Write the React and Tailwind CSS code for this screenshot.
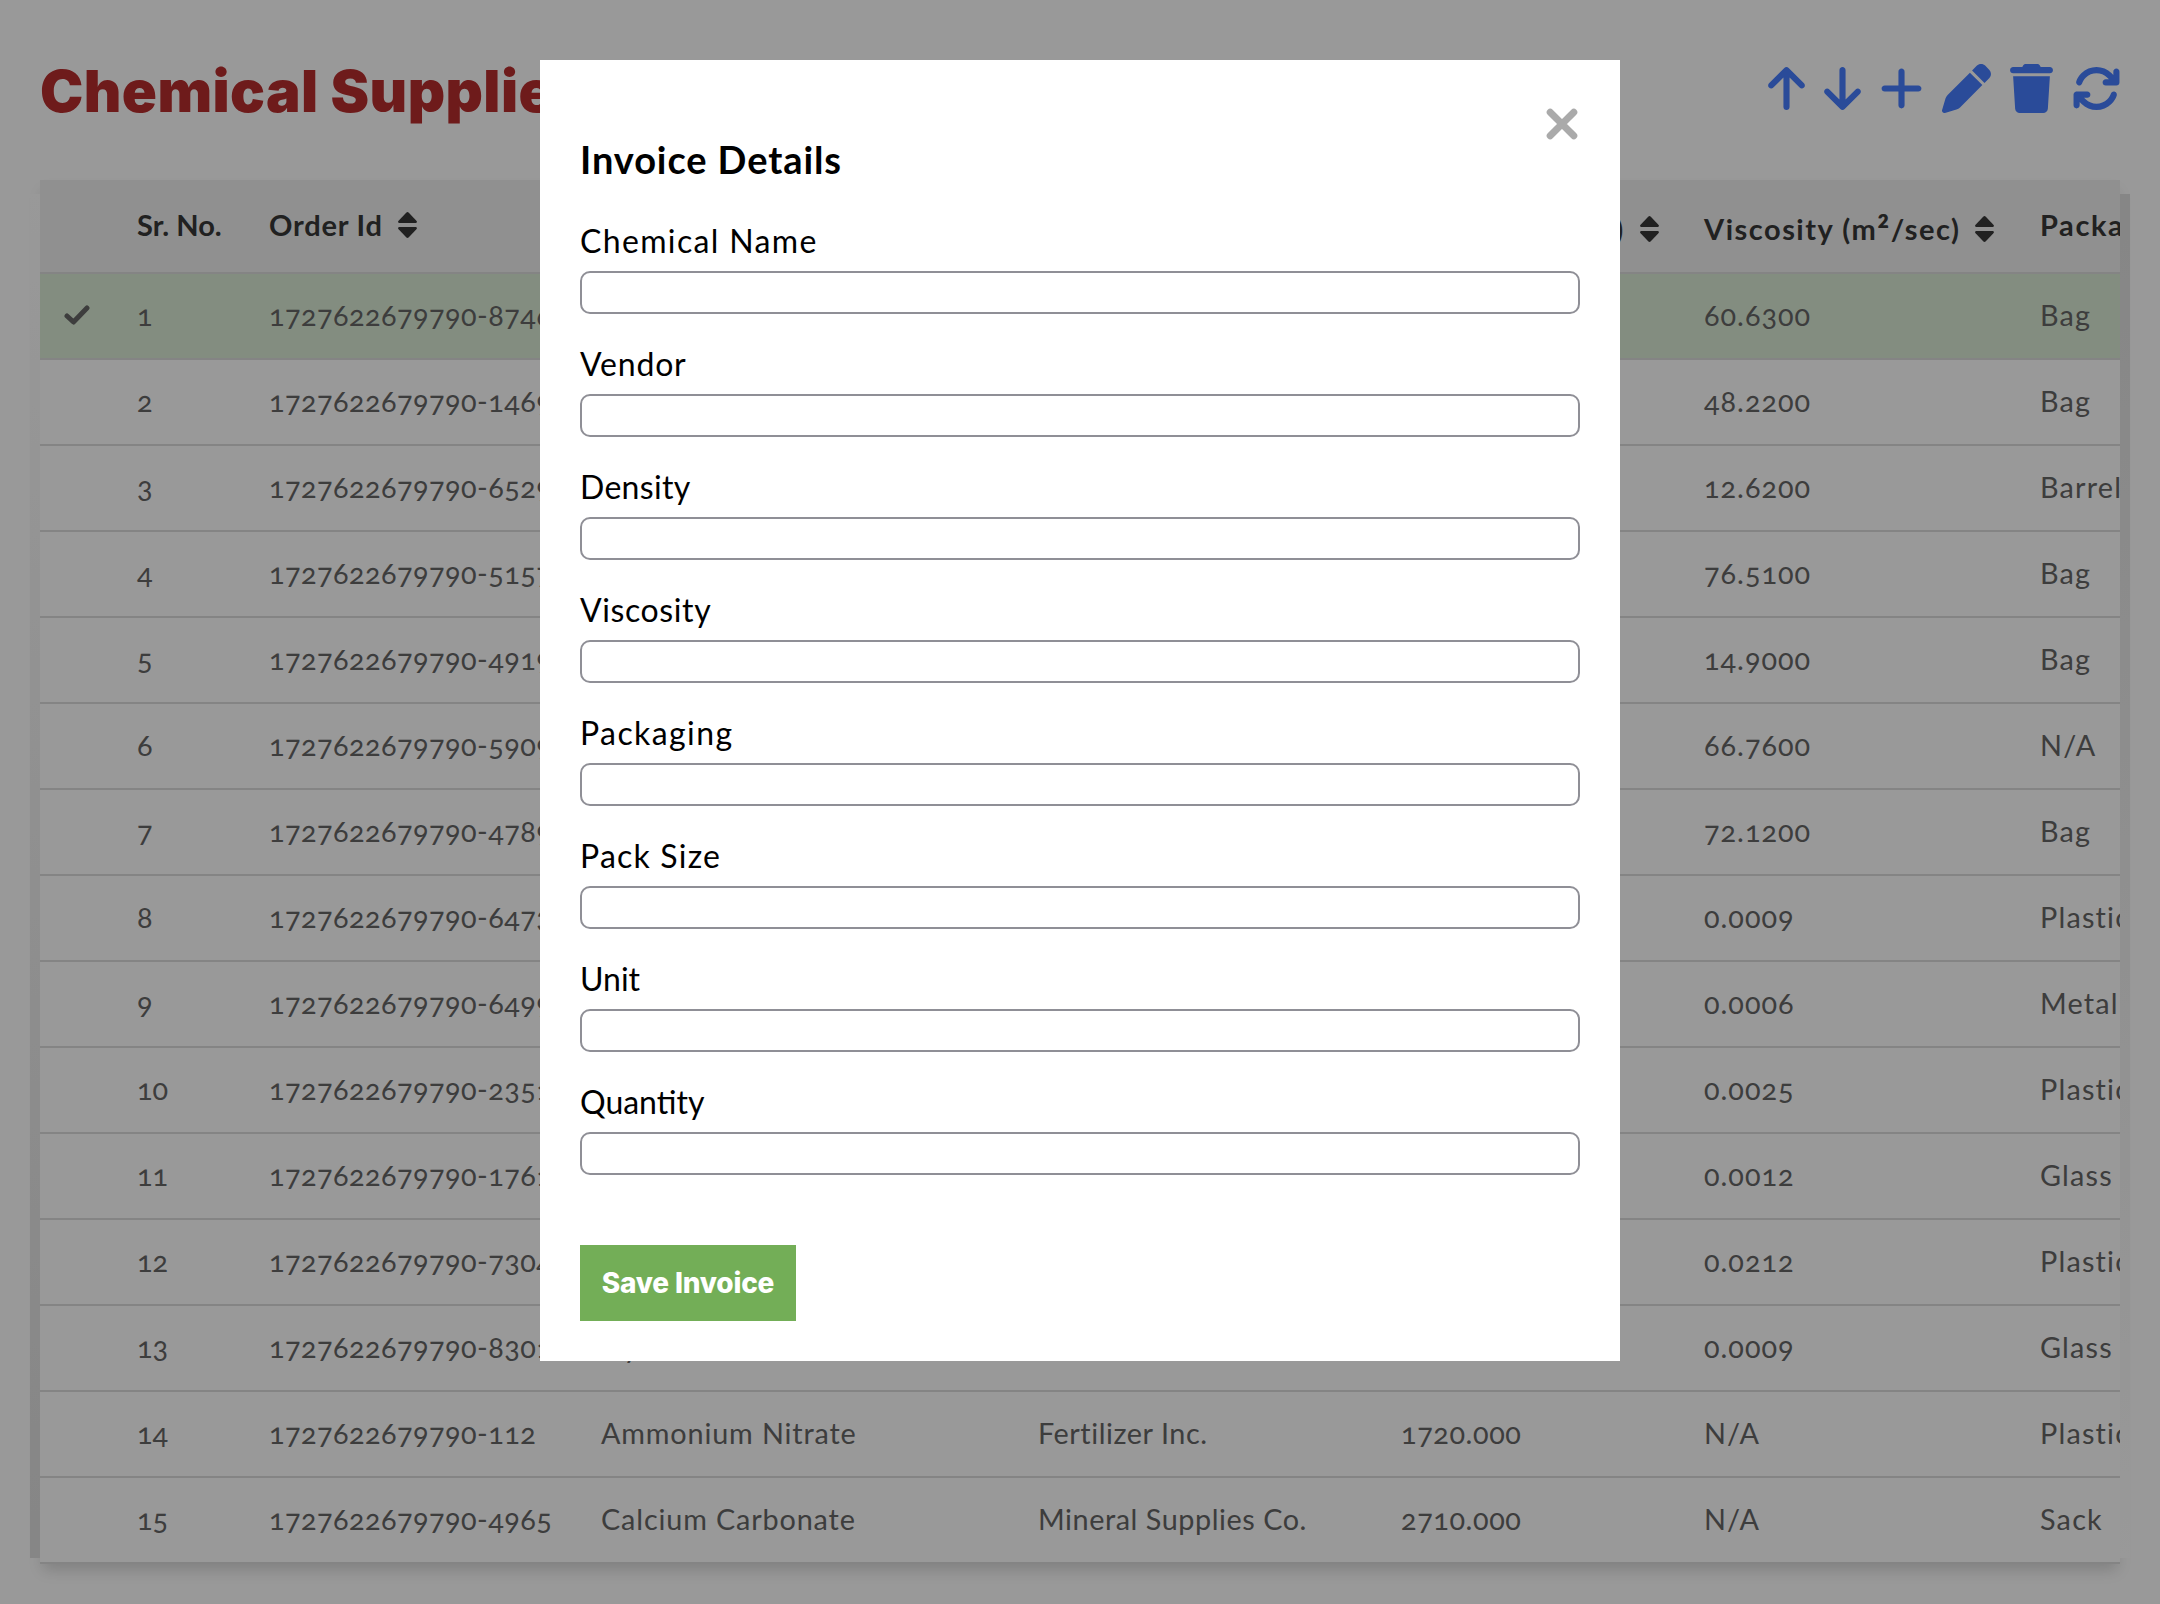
import { FaArrowUp, FaArrowDown, FaPlus, FaPen, FaTrash, FaArrowsRotate } from "react-icons/fa6";

const ROWS = [
  ["1727622679790-8746", "Ammonium Persulfate", "LG Chem", "3525.920", "60.6300", "Bag"],
  ["1727622679790-1469", "Caustic Potash", "Formosa", "3172.150", "48.2200", "Bag"],
  ["1727622679790-6529", "Dimethylaminopropylamino", "LG Chem", "8435.370", "12.6200", "Barrel"],
  ["1727622679790-5157", "Mono Ammonium Phosphate", "Sinopec", "1597.650", "76.5100", "Bag"],
  ["1727622679790-4919", "Ferric Nitrate", "DowDuPont", "364.040", "14.9000", "Bag"],
  ["1727622679790-5909", "n-Pentane", "Sinopec", "4535.260", "66.7600", "N/A"],
  ["1727622679790-4789", "Glycol Ether PM", "LG Chem", "6495.180", "72.1200", "Bag"],
  ["1727622679790-6473", "Water", "ABC Chemicals", "997.000", "0.0009", "Plastic"],
  ["1727622679790-6499", "Benzene", "XYZ Corp.", "876.000", "0.0006", "Metal"],
  ["1727622679790-2351", "Sodium Hydroxide", "Chemical Co.", "2130.000", "0.0025", "Plastic"],
  ["1727622679790-1761", "Ethanol", "PQR Industries", "789.000", "0.0012", "Glass"],
  ["1727622679790-7304", "Sulfuric Acid", "SulfurChem", "1840.000", "0.0212", "Plastic"],
  ["1727622679790-8301", "Hydrochloric Acid", "Acid Co.", "1190.000", "0.0009", "Glass"],
  ["1727622679790-112", "Ammonium Nitrate", "Fertilizer Inc.", "1720.000", "N/A", "Plastic"],
  ["1727622679790-4965", "Calcium Carbonate", "Mineral Supplies Co.", "2710.000", "N/A", "Sack"],
];

const FIELDS = [
  ["Chemical Name", "tracking-[1.35px]"],
  ["Vendor", "tracking-[0.8px]"],
  ["Density", "tracking-[0.3px]"],
  ["Viscosity", "tracking-[0.6px]"],
  ["Packaging", "tracking-[1.4px]"],
  ["Pack Size", "tracking-[1.2px]"],
  ["Unit", ""],
  ["Quantity", ""],
];

const CELL_TRACKING = [
  "tracking-[0.45px]",
  "tracking-[0.85px]",
  "tracking-[0.55px]",
  "tracking-[0.6px]",
  "tracking-[1px]",
  "tracking-[1.2px]",
];

const GRID = "grid grid-cols-[97px_132px_332px_437px_363px_303px_336px_300px] items-center";

function SortIcon() {
  return (
    <svg viewBox="0 0 19 26" className="h-[26px] w-[19px] fill-current">
      <path d="M8.200.7q1.300-1.200 2.600 0l7.600 8q1.200 1.500-.4 2.300H1q-1.600-.8-.4-2.300z" />
      <path d="M8.200 25.300q1.300 1.200 2.600 0l7.600-8q1.200-1.500-.4-2.300H1q-1.600.8-.4 2.300z" />
    </svg>
  );
}

function CheckIcon() {
  return (
    <svg viewBox="0 0 26 20" className="-mt-[2px] h-5 w-[26px] fill-none stroke-current stroke-[5]">
      <path d="M3 11l6.500 6L23 3" strokeLinecap="round" strokeLinejoin="round" />
    </svg>
  );
}

function CloseIcon() {
  return (
    <svg viewBox="0 0 32 32" className="size-8 fill-none stroke-current stroke-[7]">
      <path d="M4.200 4.200l23.600 23.600M27.800 4.200L4.200 27.800" strokeLinecap="round" />
    </svg>
  );
}

function HeaderCell({ children, sort = true, className = "" }) {
  return (
    <div className={"flex items-center gap-[15px] whitespace-nowrap " + className}>
      <span>{children}</span>
      {sort && <SortIcon />}
    </div>
  );
}

export default function App() {
  return (
    <div className="relative h-[1604px] w-[2160px] overflow-hidden bg-white font-['Lato',sans-serif]">
      <header className="flex h-[180px] items-start justify-between px-10">
        <h1 className="mt-[53px] font-['Inter',sans-serif] text-[58px] leading-[76px] font-black tracking-[0.4px] text-[#b82e2e]">
          Chemical Supplies
        </h1>
        <div className="mt-16 flex items-center gap-[19px] text-[#467dff]">
          <FaArrowUp className="h-[49px] w-[37px]" />
          <FaArrowDown className="h-[49px] w-[37px]" />
          <FaPlus className="h-[49px] w-[43px]" />
          <FaPen className="size-[49px]" />
          <FaTrash className="h-[49px] w-[43px]" />
          <FaArrowsRotate className="-mr-px size-[49px]" />
        </div>
      </header>

      <div className="relative mx-10 h-[1384px] shadow-[0_9px_14px_-3px_rgba(0,0,0,0.16)]">
        <div className="absolute top-[14px] -left-[10px] h-[1364px] w-[10px] bg-linear-to-b from-white to-[#dfdfdf]" />
        <div className="absolute top-[14px] -right-[10px] h-[1364px] w-[10px] bg-linear-to-t from-white to-[#dfdfdf]" />
        <div className="relative overflow-hidden bg-white">
          <div className={GRID + " h-[94px] border-b-2 border-[#ddd] bg-[#f0f0f0] pb-[3px] text-[29px] font-bold text-[#373737]"}>
            <div />
            <HeaderCell sort={false}>Sr. No.</HeaderCell>
            <HeaderCell className="tracking-[0.8px]">Order Id</HeaderCell>
            <HeaderCell>Chemical Name</HeaderCell>
            <HeaderCell>Vendor</HeaderCell>
            <HeaderCell className="pt-2 tracking-[1.45px]">
              Density (kg/m<span className="relative top-1 text-[36px] leading-none">³</span>)
            </HeaderCell>
            <HeaderCell className="pt-2 tracking-[1.5px]">
              Viscosity (m<span className="relative top-1 text-[36px] leading-none">²</span>/sec)
            </HeaderCell>
            <HeaderCell className="tracking-[1.6px]">Packaging</HeaderCell>
          </div>
          {ROWS.map((row, i) => (
            <div
              key={row[0]}
              className={GRID + " h-[86px] border-b-2 border-[#ddd] text-[28.8px] whitespace-nowrap text-[#666] oldstyle-nums " + (i === 0 ? "bg-[#dbecd6]" : "bg-white")}
            >
              <div className="pl-6">{i === 0 && <CheckIcon />}</div>
              <div>{i + 1}</div>
              {row.map((cell, j) => (
                <div key={j} className={CELL_TRACKING[j]}>{cell}</div>
              ))}
            </div>
          ))}
        </div>
      </div>

      <div className="absolute inset-0 bg-black/40">
        <div className="mx-auto mt-[60px] flex h-[1301px] w-[1080px] flex-col bg-white px-10 text-black">
          <div className="flex h-[75px] items-start justify-end pt-12 pr-[2px] text-[#aaa]">
            <CloseIcon />
          </div>
          <h2 className="text-[38px] leading-[48px] font-bold tracking-[0.9px]">Invoice Details</h2>
          <div className="mt-[26px] flex flex-col">
            {FIELDS.map(([name, tracking]) => (
              <label key={name} className="flex h-[123px] flex-col">
                <span className={"mt-[13px] text-[32px] leading-[38px] " + tracking}>{name}</span>
                <input className="mt-[11px] h-[43px] rounded-[10px] border-2 border-[#8f8f96] bg-white" />
              </label>
            ))}
          </div>
          <button className="mt-[52px] h-[76px] w-[216px] bg-[#73ae57] font-['Inter',sans-serif] text-[28px] font-extrabold tracking-[-0.2px] text-white">
            Save Invoice
          </button>
        </div>
      </div>
    </div>
  );
}
